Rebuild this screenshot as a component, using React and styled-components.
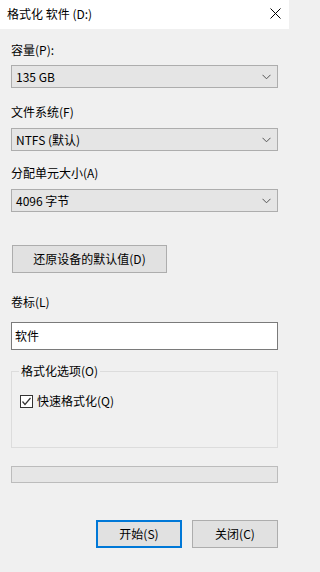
import styled, { createGlobalStyle } from "styled-components";

const GlobalStyle = createGlobalStyle`
    html, body {
        margin: 0;
        padding: 0;
        background: #f0f0f0;
    }
    body {
        font-family: "Noto Sans CJK SC", "Liberation Sans", sans-serif;
        font-size: 12px;
        color: #000;
    }
`

const Dialog = styled.div`
    width: 289px;
    height: 572px;
    background: #f0f0f0;
    display: flex;
    flex-direction: column;
`

const TitleBar = styled.div`
    height: 29px;
    background: #fff;
    display: flex;
    align-items: center;
    justify-content: space-between;
    padding: 0 7px 2px 7px;
    box-sizing: border-box;
`

const TitleText = styled.div`
    font-size: 12px;
    line-height: 16px;
`

const CloseX = styled.svg`
    width: 11px;
    height: 11px;
    margin-right: 1px;
`

const Body = styled.div`
    display: flex;
    flex-direction: column;
    padding: 0 11px;
`

const Label = styled.div`
    line-height: 16px;
    margin-top: ${(p) => p.$top}px;
    margin-bottom: ${(p) => p.$bottom}px;
`

const Combo = styled.div`
    height: 23px;
    box-sizing: border-box;
    border: 1px solid #adadad;
    background: #e5e5e5;
    display: flex;
    align-items: center;
    justify-content: space-between;
    padding: 0 6px 0 4px;
    line-height: 16px;
`

const Chevron = styled.svg`
    width: 9px;
    height: 6px;
`

const PushButton = styled.div`
    height: 28px;
    box-sizing: border-box;
    border: ${(p) => (p.$default ? "2px solid #0078d7" : "1px solid #adadad")};
    background: #e1e1e1;
    display: flex;
    align-items: center;
    justify-content: center;
    width: ${(p) => p.$width}px;
    line-height: 16px;
`

const ResetRow = styled.div`
    margin-top: 33px;
    padding-left: 1px;
    display: flex;
`

const TextInput = styled.div`
    height: 28px;
    box-sizing: border-box;
    border: 1px solid #7a7a7a;
    background: #fff;
    display: flex;
    align-items: center;
    padding-left: 3px;
    line-height: 16px;
`

const Group = styled.fieldset`
    margin: 13px 0 0 0;
    padding: 14px 8px 0 8px;
    height: 85px;
    box-sizing: border-box;
    border: 1px solid #dcdcdc;
    min-width: 0;
`

const Legend = styled.legend`
    padding: 0 2px;
    margin-left: -1px;
    line-height: 16px;
`

const CheckRow = styled.div`
    display: flex;
    align-items: center;
    gap: 4px;
    line-height: 16px;
`

const CheckBox = styled.span`
    width: 13px;
    height: 13px;
    box-sizing: border-box;
    border: 1px solid #333;
    background: #fff;
    display: flex;
    align-items: center;
    justify-content: center;
`

const Progress = styled.div`
    margin-top: 18px;
    height: 17px;
    box-sizing: border-box;
    border: 1px solid #bcbcbc;
    background: #e6e6e6;
`

const Footer = styled.div`
    margin-top: 37px;
    display: flex;
    justify-content: flex-end;
    gap: 10px;
`

function DropDown({ value }) {
    return (
        <Combo>
            <span>{value}</span>
            <Chevron viewBox="0 0 9 6">
                <path d="M0.5 0.8 L4.5 4.8 L8.5 0.8" fill="none" stroke="#555" strokeWidth="1" />
            </Chevron>
        </Combo>
    )
}

export default function App() {
    return (
        <>
            <GlobalStyle />
            <Dialog>
                <TitleBar>
                    <TitleText>格式化 软件 (D:)</TitleText>
                    <CloseX viewBox="0 0 11 11">
                        <path d="M0.5 0.5 L10.5 10.5 M10.5 0.5 L0.5 10.5" stroke="#000" strokeWidth="1" />
                    </CloseX>
                </TitleBar>
                <Body>
                    <Label $top={13} $bottom={7}>容量(P):</Label>
                    <DropDown value="135 GB" />
                    <Label $top={16} $bottom={8}>文件系统(F)</Label>
                    <DropDown value="NTFS (默认)" />
                    <Label $top={14} $bottom={8}>分配单元大小(A)</Label>
                    <DropDown value="4096 字节" />
                    <ResetRow>
                        <PushButton $width={155}>还原设备的默认值(D)</PushButton>
                    </ResetRow>
                    <Label $top={21} $bottom={12}>卷标(L)</Label>
                    <TextInput>软件</TextInput>
                    <Group>
                        <Legend>格式化选项(O)</Legend>
                        <CheckRow>
                            <CheckBox>
                                <svg width="11" height="11" viewBox="0 0 11 11">
                                    <path d="M1.5 5.5 L4 8.5 L9.5 2" fill="none" stroke="#333" strokeWidth="1.2" />
                                </svg>
                            </CheckBox>
                            <span>快速格式化(Q)</span>
                        </CheckRow>
                    </Group>
                    <Progress />
                    <Footer>
                        <PushButton $width={86} $default>开始(S)</PushButton>
                        <PushButton $width={86}>关闭(C)</PushButton>
                    </Footer>
                </Body>
            </Dialog>
        </>
    )
}
